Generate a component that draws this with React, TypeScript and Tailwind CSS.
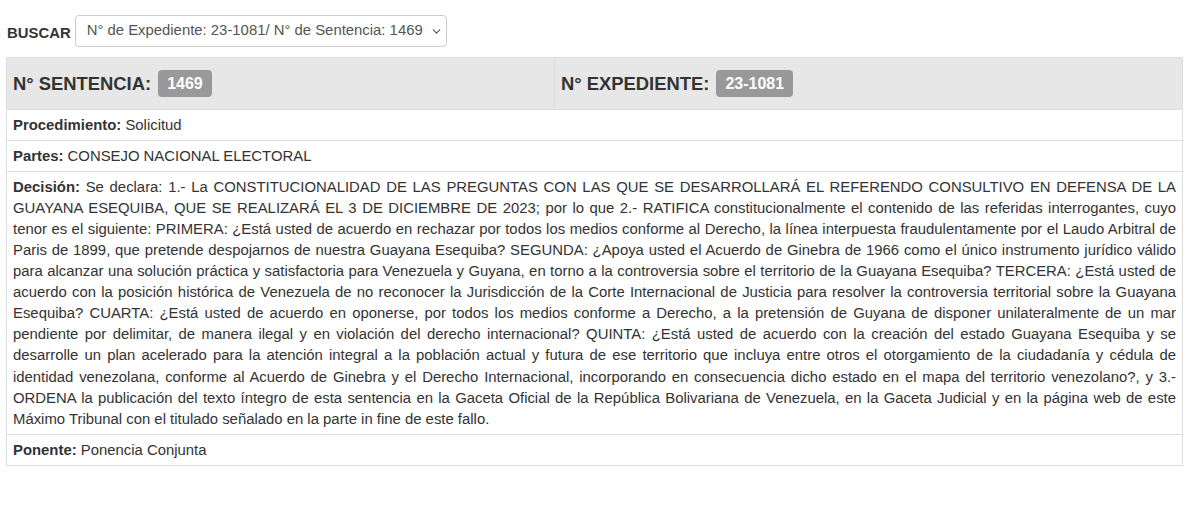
import { ChevronDown } from 'lucide-react';

const decision =
  'Se declara: 1.- La CONSTITUCIONALIDAD DE LAS PREGUNTAS CON LAS QUE SE DESARROLLARÁ EL REFERENDO CONSULTIVO EN DEFENSA DE LA GUAYANA ESEQUIBA, QUE SE REALIZARÁ EL 3 DE DICIEMBRE DE 2023; por lo que 2.- RATIFICA constitucionalmente el contenido de las referidas interrogantes, cuyo tenor es el siguiente: PRIMERA: ¿Está usted de acuerdo en rechazar por todos los medios conforme al Derecho, la línea interpuesta fraudulentamente por el Laudo Arbitral de Paris de 1899, que pretende despojarnos de nuestra Guayana Esequiba? SEGUNDA: ¿Apoya usted el Acuerdo de Ginebra de 1966 como el único instrumento jurídico válido para alcanzar una solución práctica y satisfactoria para Venezuela y Guyana, en torno a la controversia sobre el territorio de la Guayana Esequiba? TERCERA: ¿Está usted de acuerdo con la posición histórica de Venezuela de no reconocer la Jurisdicción de la Corte Internacional de Justicia para resolver la controversia territorial sobre la Guayana Esequiba? CUARTA: ¿Está usted de acuerdo en oponerse, por todos los medios conforme a Derecho, a la pretensión de Guyana de disponer unilateralmente de un mar pendiente por delimitar, de manera ilegal y en violación del derecho internacional? QUINTA: ¿Está usted de acuerdo con la creación del estado Guayana Esequiba y se desarrolle un plan acelerado para la atención integral a la población actual y futura de ese territorio que incluya entre otros el otorgamiento de la ciudadanía y cédula de identidad venezolana, conforme al Acuerdo de Ginebra y el Derecho Internacional, incorporando en consecuencia dicho estado en el mapa del territorio venezolano?, y 3.- ORDENA la publicación del texto íntegro de esta sentencia en la Gaceta Oficial de la República Bolivariana de Venezuela, en la Gaceta Judicial y en la página web de este Máximo Tribunal con el titulado señalado en la parte in fine de este fallo.';

const rows = [
  { label: 'Procedimiento:', value: 'Solicitud' },
  { label: 'Partes:', value: 'CONSEJO NACIONAL ELECTORAL' },
  { label: 'Decisión:', value: decision },
  { label: 'Ponente:', value: 'Ponencia Conjunta' },
];

const Badge = ({ children }: { children: string }) => (
  <span className="inline-block bg-[#999] text-white font-bold text-[16px] leading-[27px] px-[9px] rounded-[4px]">{children}</span>
);

const App = () => {
  return (
    <div className="min-h-[511px] bg-white text-[#333] font-['Liberation_Sans',Arial,sans-serif] text-[14.88px] leading-[21.1px] pt-[15px] pl-[6px] pr-[17px]">
      <div className="flex items-center gap-[4px] h-[32px]">
        <label className="font-bold pl-[1px] pt-[6px]">BUSCAR</label>
        <div className="flex items-center w-[372px] h-[32px] border border-[#ccc] rounded-[4px] bg-white pl-[11px] pr-[3px] text-[#555] whitespace-nowrap">
          <span>N° de Expediente: 23-1081/ N° de Sentencia: 1469</span>
          <ChevronDown size={13} strokeWidth={2} className="ml-auto text-[#555]" />
        </div>
      </div>

      <div className="mt-[10px] border border-[#ddd]">
        <div className="grid grid-cols-[548px_1fr] bg-[#e7e7e7] h-[51px]">
          <div className="flex items-center gap-[7px] px-[6px] border-r border-[#ddd]">
            <span className="font-bold text-[18.4px]">N° SENTENCIA:</span>
            <Badge>1469</Badge>
          </div>
          <div className="flex items-center gap-[7px] px-[6px]">
            <span className="font-bold text-[18.4px]">N° EXPEDIENTE:</span>
            <Badge>23-1081</Badge>
          </div>
        </div>
        {rows.map((row) => (
          <div key={row.label} className="border-t border-[#ddd] px-[6px] py-[4.5px] text-justify">
            <strong>{row.label}</strong> {row.value}
          </div>
        ))}
      </div>
    </div>
  );
};

export default App;
